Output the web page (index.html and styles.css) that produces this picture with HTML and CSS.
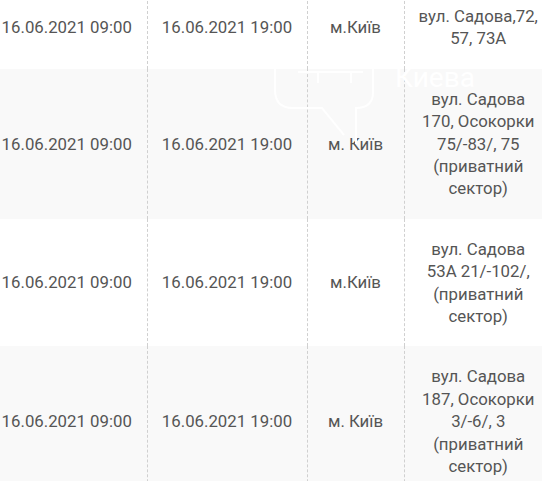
FILE: index.html
```html
<!DOCTYPE html>
<html lang="uk">
<head>
<meta charset="utf-8">
<title>Графік відключень</title>
<link rel="stylesheet" href="styles.css">
</head>
<body>
<div class="page">
  <table class="schedule">
    <colgroup>
      <col class="c-start"><col class="c-end"><col class="c-city"><col class="c-addr">
    </colgroup>
    <tbody>
      <tr class="odd">
        <td>16.06.2021 09:00</td>
        <td>16.06.2021 19:00</td>
        <td>м.Київ</td>
        <td>вул. Садова,72, 57, 73А</td>
      </tr>
      <tr class="even">
        <td>16.06.2021 09:00</td>
        <td>16.06.2021 19:00</td>
        <td>м. Київ</td>
        <td>вул. Садова 170, Осокорки 75/-83/, 75 (приватний сектор)</td>
      </tr>
      <tr class="odd">
        <td>16.06.2021 09:00</td>
        <td>16.06.2021 19:00</td>
        <td>м.Київ</td>
        <td>вул. Садова 53А 21/-102/, (приватний сектор)</td>
      </tr>
      <tr class="even">
        <td>16.06.2021 09:00</td>
        <td>16.06.2021 19:00</td>
        <td>м. Київ</td>
        <td>вул. Садова 187, Осокорки 3/-6/, 3 (приватний сектор)</td>
      </tr>
    </tbody>
  </table>
  <div class="watermark" aria-hidden="true">
    <svg class="wm-logo" width="110" height="75" viewBox="0 0 110 75">
      <path d="M2 0 V21 Q2 39 20 39 H49 L71 66 M100 0 V23 Q100 39 83 39 V75 M25 3 H90 M45 3 V14 M78 3 V14" fill="none" stroke="#ffffff" stroke-width="2"/>
    </svg>
    <span class="wm-text">Киева</span>
  </div>
</div>
</body>
</html>
```

FILE: styles.css
```css
html, body {
  margin: 0;
  padding: 0;
  background: #ffffff;
  overflow: hidden;
}

.page {
  position: relative;
  width: 542px;
  height: 481px;
  overflow: hidden;
}

.schedule {
  border-collapse: collapse;
  table-layout: fixed;
  width: 565px;
  margin: -14px 0 0 -13px;
  font-family: Roboto, "Noto Sans", sans-serif;
  font-size: 16.8px;
  line-height: 22.4px;
  color: #555555;
}

.c-start { width: 160px; }
.c-end { width: 160px; }
.c-city { width: 97px; }
.c-addr { width: 148px; }

.schedule td {
  padding: 19px 12px;
  text-align: center;
  vertical-align: middle;
  border-left: 1px dashed #d0d0d0;
  white-space: normal;
}

.schedule td:first-child {
  border-left: none;
  padding-left: 0;
  padding-right: 0;
}

.schedule td:nth-child(2) {
  padding-left: 0;
  padding-right: 0;
}

.schedule td:nth-child(3) {
  padding-left: 4px;
  padding-right: 4px;
}

.odd { background: #ffffff; }
.even { background: #f9f9f9; }

.watermark {
  position: absolute;
  left: 273px;
  top: 69px;
  display: flex;
  align-items: flex-start;
  gap: 12px;
  pointer-events: none;
}

.wm-logo {
  display: block;
}

.wm-text {
  display: block;
  font-family: Roboto, "Noto Sans", sans-serif;
  font-size: 28px;
  line-height: 16px;
  padding-top: 1px;
  color: #ffffff;
}
```
